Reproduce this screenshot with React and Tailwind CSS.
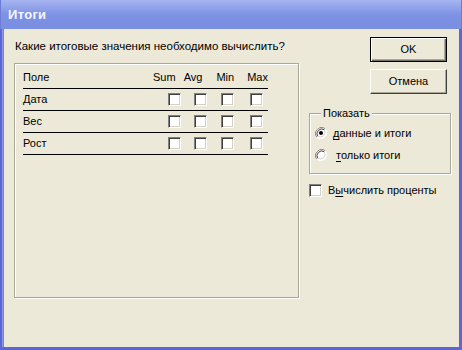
import React from "react";

const font = { fontFamily: '"Liberation Sans", Arial, sans-serif' };

const CheckBox = ({ checked = false }) => (
  <span className="block w-[13px] h-[13px] bg-white border border-t-[#808080] border-l-[#808080] border-b-white border-r-white shadow-[inset_1px_1px_0_#404040,inset_-1px_-1px_0_#d4d0c8] shrink-0">
    {checked && (
      <svg viewBox="0 0 11 11" className="w-full h-full">
        <path d="M2 5l2 2 4-4" stroke="black" strokeWidth="1.5" fill="none" />
      </svg>
    )}
  </span>
);

const Radio = ({ checked }) => (
  <svg width="12" height="12" viewBox="0 0 12 12" className="shrink-0">
    <circle cx="6" cy="6" r="6" fill="#ffffff" />
    <path d="M10.2 1.8A6 6 0 0 0 1.8 10.2" stroke="#808080" strokeWidth="1" fill="none" />
    <path d="M9.3 2.7A4.8 4.8 0 0 0 2.7 9.3" stroke="#404040" strokeWidth="1" fill="none" />
    <path d="M1.8 10.2A6 6 0 0 0 10.2 1.8" stroke="#ffffff" strokeWidth="1" fill="none" />
    <path d="M2.7 9.3A4.8 4.8 0 0 0 9.3 2.7" stroke="#d4d0c8" strokeWidth="1" fill="none" />
    {checked && <circle cx="6" cy="6" r="2" fill="#000" />}
  </svg>
);

const rows = ["Дата", "Вес", "Рост"];

export default function App() {
  return (
    <div
      className="w-[462px] h-[350px] flex flex-col bg-[#5d66d4] text-[11px] text-black overflow-hidden"
      style={font}
    >
      {/* title bar */}
      <div className="h-[29px] shrink-0 flex items-center pl-[7px] bg-gradient-to-b from-[#a6b4f0] via-[#7e92e4] to-[#7a8ee2] border-l border-r border-[#6c7ad8]">
        <span className="text-[13px] font-bold text-[#f4f6ff] tracking-[0.3px]">Итоги</span>
      </div>

      {/* body */}
      <div className="flex-1 flex mx-[3px] mb-[3px] bg-[#ece9d8] border-l-[1px] border-[#6f80df] shadow-[-1px_0_0_#8a9ae6]">
        {/* left */}
        <div className="flex flex-col pl-[10px]">
          <div className="mt-[10px] h-[14px] leading-[14px] pl-[1px] text-[11.5px]">
            Какие итоговые значения необходимо вычислить?
          </div>
          <div className="mt-[10px] w-[285px] h-[235px] border border-[#aca899] shadow-[inset_1px_1px_0_#ffffff,1px_1px_0_#ffffff] pl-[8px] pt-[2px]">
            <div className="w-[245px] h-[23px] flex items-center border-b border-black">
              <span className="w-[131px]">Поле</span>
              <span className="w-[31px]">Sum</span>
              <span className="w-[33px]">Avg</span>
              <span className="w-[31px]">Min</span>
              <span>Max</span>
            </div>
            {rows.map((name) => (
              <div key={name} className="w-[245px] h-[22px] flex items-center border-b border-black">
                <span className="w-[145px]">{name}</span>
                <CheckBox />
                <span className="w-[13px]" />
                <CheckBox />
                <span className="w-[14px]" />
                <CheckBox />
                <span className="w-[16px]" />
                <CheckBox />
              </div>
            ))}
          </div>
        </div>

        {/* right */}
        <div className="flex flex-col ml-[10px] pt-[8px] w-[142px]">
          <button className="ml-[61px] w-[77px] h-[25px] bg-[#ece9d8] border border-black shadow-[inset_1px_1px_0_#ffffff,inset_-1px_-1px_0_#716f64,inset_-2px_-2px_0_#aca899]">
            OK
          </button>
          <button className="ml-[61px] mt-[7px] w-[77px] h-[25px] bg-[#ece9d8] border border-t-white border-l-white border-b-[#404040] border-r-[#404040] shadow-[inset_-1px_-1px_0_#aca899]">
            Отмена
          </button>

          <fieldset className="mt-[12px] w-[142px] h-[68px] border border-[#aca899] shadow-[inset_1px_1px_0_#ffffff,1px_1px_0_#ffffff] pl-[5px]">
            <legend className="ml-[6px] px-[2px] leading-[14px] bg-[#ece9d8]">Показать</legend>
            <div className="flex items-center h-[14px] mt-[6px]">
              <Radio checked />
              <span className="ml-[6px]">
                <u className="underline-offset-2">д</u>анные и итоги
              </span>
            </div>
            <div className="flex items-center h-[14px] mt-[8px]">
              <Radio />
              <span className="ml-[9px]">
                <u className="underline-offset-2">т</u>олько итоги
              </span>
            </div>
          </fieldset>

          <div className="flex items-center mt-[8px]">
            <CheckBox />
            <span className="ml-[6px]">
              В<u className="underline-offset-2">ы</u>числить проценты
            </span>
          </div>
        </div>
      </div>
    </div>
  );
}
